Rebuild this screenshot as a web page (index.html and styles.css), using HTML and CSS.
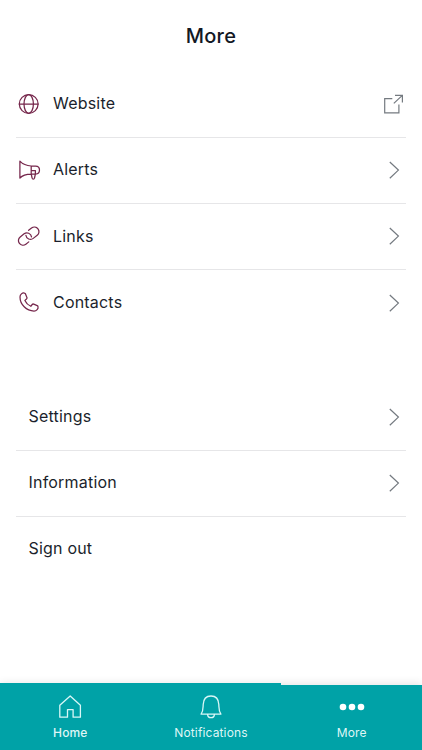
FILE: index.html
```
<!DOCTYPE html>
<html lang="en">
<head>
<meta charset="utf-8">
<meta name="viewport" content="width=device-width, initial-scale=1">
<title>More</title>
<link rel="stylesheet" href="styles.css">
</head>
<body>
<svg width="0" height="0" class="defs">
  <symbol id="chevron" viewBox="0 0 26 26"><path d="M9.8 5l8.600 8.100-8.600 8.100"/></symbol>
</svg>
<div class="screen">
  <header class="header"><h1>More</h1></header>
  <main class="content">
    <ul class="menu">
      <li class="row">
        <svg class="icon" viewBox="0 0 26 26"><circle cx="12.7" cy="13" r="9.4"/><ellipse cx="12.7" cy="13" rx="4.7" ry="9.4"/><path d="M3.3 13h18.8"/></svg>
        <span class="label">Website</span>
        <svg class="action" viewBox="0 0 26 26"><path d="M12.3 7.6H4.7v14.2h14.2v-8.2M13.8 12.4l8.5-8M15 4.4h7.4v7"/></svg>
      </li>
      <li class="row">
        <svg class="icon" viewBox="0 0 26 26"><path d="M3.900 4.200c2.500 2.700 6.300 4.600 11.300 4.800h4.400c5.200 0 5.200 8 0 8h-4.400c-5 0-8.800 1.200-11.300 4zM15.200 9v8l.9 4q.2 1 1.200 1t1.200-1l.9-4v-3.500M15.400 13.500h4"/></svg>
        <span class="label">Alerts</span>
        <svg class="action"><use href="#chevron"/></svg>
      </li>
      <li class="row">
        <svg class="icon" viewBox="0 0 26 26"><g transform="translate(12.700 13.100) rotate(-38)"><path d="M-3.500 4.600H-7.200a4.600 4.600 0 0 1 0-9.200H-2.200a4.600 4.600 0 0 1 3.900 7"/><path d="M3.500-4.600H7.200a4.600 4.600 0 0 1 0 9.200H2.200a4.600 4.600 0 0 1-3.900-7"/></g></svg>
        <span class="label">Links</span>
        <svg class="action"><use href="#chevron"/></svg>
      </li>
      <li class="row">
        <svg class="icon" viewBox="0 0 26 26"><path d="M8.500 4.100C6.300 3.500 4 5.500 4 8c0 7.500 6.500 14 14 14 2.500 0 4.600-2.200 4-4.400-.1-.5-.4-.8-.8-1l-3.500-1.500c-.6-.2-1.100-.1-1.500.4l-1.400 1.800c-2.600-1.200-4.700-3.300-5.900-5.900l1.600-1.400c.5-.4.7-1 .4-1.600L9.500 4.900c-.2-.4-.5-.7-1-.8z"/></svg>
        <span class="label">Contacts</span>
        <svg class="action"><use href="#chevron"/></svg>
      </li>
    </ul>
    <ul class="menu plain">
      <li class="row"><span class="label">Settings</span><svg class="action"><use href="#chevron"/></svg></li>
      <li class="row"><span class="label">Information</span><svg class="action"><use href="#chevron"/></svg></li>
      <li class="row"><span class="label">Sign out</span></li>
    </ul>
  </main>
  <nav class="tabs">
    <a class="tab active"><svg class="tab-icon" viewBox="0 0 26 26"><path d="M2.800 11.300L13.200 2l10.200 9.300v11.900h-7.300v-7.600h-5.600v7.600H2.800z"/></svg><span>Home</span></a>
    <a class="tab"><svg class="tab-icon" viewBox="0 0 26 26"><path d="M3.100 20.200c2.300-3.400 1.900-6 2.100-9.700C5.400 5.300 8.300 2 13 2s7.600 3.300 7.800 8.500c.2 3.700-.2 6.300 2.100 9.700zM9.600 20.400c.2 4.400 6.600 4.400 6.800 0"/></svg><span>Notifications</span></a>
    <a class="tab"><svg class="tab-icon dots" viewBox="0 0 26 26"><circle cx="4" cy="13" r="3.300"/><circle cx="13" cy="13" r="3.300"/><circle cx="22" cy="13" r="3.300"/></svg><span>More</span></a>
  </nav>
</div>
</body>
</html>
```
FILE: styles.css
```
* { box-sizing: border-box; }
body { margin: 0; background: #fff; color: #1b1f2c; font-family: Inter, "Liberation Sans", sans-serif; }
.defs { display: none; }
.screen { display: flex; flex-direction: column; height: 750px; overflow: hidden; }
.header { height: 71.7px; flex: none; display: flex; align-items: center; justify-content: center; }
h1 { margin: 0; font-size: 20px; font-weight: 450; line-height: 24px; letter-spacing: .25px; color: #131824; }
.content { flex: 1; padding: 0 16px; }
.menu { list-style: none; margin: 0; padding: 0; }
.row { height: 66.2px; display: flex; align-items: center; padding-bottom: 2px; border-bottom: 1px solid #e6e6e8; }
.row:last-child { border-bottom-color: transparent; }
.plain { margin-top: 48px; }
.plain .row { padding-left: 12.5px; }
svg { fill: none; stroke-linejoin: round; stroke-linecap: round; }
.icon { width: 26px; height: 26px; margin-top: .6px; margin-right: 11px; stroke: #75264b; stroke-width: 1.25; }
.label { flex: 1; font-size: 16px; line-height: 24px; letter-spacing: .2px; }
.action { width: 26px; height: 26px; margin-top: 1.4px; stroke: #747a80; stroke-width: 1.2; stroke-linecap: butt; stroke-linejoin: miter; }
.tabs { flex: none; height: 65px; display: grid; grid-template-columns: repeat(3, 1fr); position: relative; background: #00a2a7; box-shadow: 0 -2px 8px rgba(0, 0, 0, .1); }
.tabs::before { content: ""; position: absolute; left: 0; top: -2px; width: 66.667%; height: 3px; background: #00a2a7; }
.tab { display: flex; flex-direction: column; align-items: center; padding-top: 9px; color: #dff6f6; font-size: 12px; line-height: 16px; letter-spacing: .15px; }
.tab span { margin-top: 5px; }
.active { font-weight: 500; }
.tab-icon { width: 26px; height: 26px; stroke: #d9f7f7; stroke-width: 1.3; }
.dots { fill: #fff; stroke: none; }
```
